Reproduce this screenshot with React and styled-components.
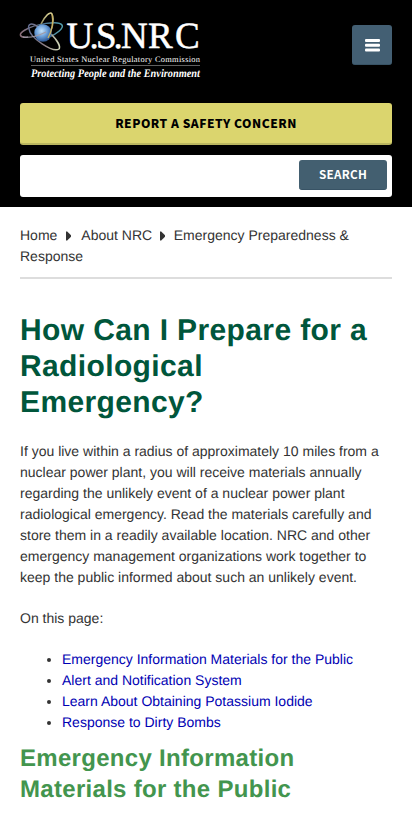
import React from 'react';
import styled, { createGlobalStyle } from 'styled-components';

const GlobalStyle = createGlobalStyle`
  * { box-sizing: border-box; }
  html, body { margin: 0; background: #fff; }
  body {
    height: 823px;
    overflow: hidden;
    font: 14px/21px "Liberation Sans", Arial, sans-serif;
    color: #333;
    text-rendering: geometricPrecision;
  }
`;

const Header = styled.header`
  height: 207px;
  padding: 10px 20px;
  background: #000;
`;
const Brand = styled.div`
  display: flex;
  justify-content: space-between;
  align-items: flex-start;
  height: 93px;
`;
const LogoSvg = styled.svg`
  display: block;
  flex: none;
  overflow: visible;
`;
const MenuButton = styled.button`
  display: flex;
  align-items: center;
  justify-content: center;
  width: 40px;
  height: 40px;
  margin: 15px 0 0;
  padding: 1px 0 0;
  border: 0;
  border-bottom: 1px solid #385365;
  border-radius: 3px;
  background: #435f73;
`;
const ReportButton = styled.button`
  display: block;
  width: 100%;
  height: 42px;
  padding: 0;
  border: 0;
  border-bottom: 2px solid #bab65f;
  border-radius: 3px;
  background: #dbd56e;
  color: #000;
  font: 900 12px/38px "Noto Sans CJK SC", sans-serif;
  letter-spacing: 0.5px;
`;
const SearchForm = styled.form`
  display: flex;
  height: 42px;
  margin-top: 10px;
  padding: 5px;
  border-radius: 3px;
  background: #fff;
`;
const SearchInput = styled.input`
  flex: 1;
  min-width: 0;
  border: 0;
  outline: 0;
  background: transparent;
`;
const SearchButton = styled.button`
  width: 88px;
  height: 30px;
  padding: 0 0 2px;
  border: 0;
  border-bottom: 1px solid #385365;
  border-radius: 3px;
  background: #435f70;
  color: #fff;
  font: 700 11.7px/27px "Noto Sans CJK SC", sans-serif;
  letter-spacing: 0.25px;
`;
const Main = styled.main`
  padding: 18px 20px 0;
`;
const Breadcrumb = styled.nav`
  height: 54px;
  border-bottom: 2px solid #ddd;
`;
const ArrowSvg = styled.svg`
  margin: 0 10px 0 9px;
  vertical-align: -1px;
`;
const LastArrow = styled(ArrowSvg)`
  margin: 0 8.6px 0 8px;
`;
const Title = styled.h1`
  margin: 34px 0 20px;
  color: #00563b;
  font-size: 30px;
  line-height: 36px;
  letter-spacing: 0.375px;
`;
const Paragraph = styled.p`
  margin: 0 0 20px;
`;
const LinkList = styled.ul`
  margin: 0 0 10px;
  padding-left: 42px;
`;
const PageLink = styled.a`
  color: #0000b3;
  text-decoration: none;
`;
const Subtitle = styled.h2`
  margin: 0;
  color: #43954e;
  font-size: 24px;
  line-height: 31px;
  letter-spacing: 0.3px;
`;

function Logo() {
  return (
    <LogoSvg width="181" height="72" viewBox="20 10 181 72" role="img" aria-label="U.S. NRC">
      <defs>
        <radialGradient id="nucleus" cx=".42" cy=".38" r=".62">
          <stop offset="0" stopColor="#c5e3fa" />
          <stop offset=".5" stopColor="#6fa3dc" />
          <stop offset="1" stopColor="#2c5795" />
        </radialGradient>
        <linearGradient id="wide" x1="0" x2="1">
          <stop offset="0" stopColor="#8d6f7a" />
          <stop offset=".55" stopColor="#4f7591" />
          <stop offset="1" stopColor="#529fae" />
        </linearGradient>
        <linearGradient id="tall" x1="0" y1="0" x2="0" y2="1">
          <stop offset="0" stopColor="#d8cf94" />
          <stop offset=".5" stopColor="#8a8558" />
          <stop offset="1" stopColor="#8794a0" />
        </linearGradient>
        <linearGradient id="diagonal" x1="0" x2="1">
          <stop offset="0" stopColor="#626d91" />
          <stop offset=".5" stopColor="#8b7c83" />
          <stop offset="1" stopColor="#d0d6b8" />
        </linearGradient>
      </defs>
      <g fill="none" strokeWidth="1.5">
        <path d="M28 37C19 38 18 34 25 30C35 24 59 20 62 25C64 28 57 34 49 37" stroke="url(#wide)" />
        <path d="M41 24C45 16 50 11 52 14C55 20 52 31 47 38" stroke="url(#tall)" />
        <path d="M38 27C32 22 27 24 29 29C30 38 53 53 59 49C61 46 56 39 51 34" stroke="url(#diagonal)" />
      </g>
      <circle cx="43" cy="33" r="8.7" fill="url(#nucleus)" />
      <path d="M52 14c1.5 8 .5 16-4 24" fill="none" stroke="#c8b263" strokeWidth="1.3" />
      <path d="M23 37c7 1 15-1 23-5" fill="none" stroke="#a39ba6" strokeWidth="1.2" />
      <g fill="#fff" fontFamily="Liberation Serif, serif">
        <text x="66.5 89.5 96 113.5 121 148 175" y="47.5" fontSize="37" stroke="#fff" strokeWidth=".5">U.S.NRC</text>
        <text x="30" y="61.5" fontSize="8.4" textLength="170" lengthAdjust="spacing">United States Nuclear Regulatory Commission</text>
        <text x="31" y="77" fontSize="11.5" fontStyle="italic" fontWeight="700" textLength="169" lengthAdjust="spacingAndGlyphs">Protecting People and the Environment</text>
      </g>
      <path d="M31 65.5H200" stroke="#777" strokeWidth=".8" />
    </LogoSvg>
  );
}

function MenuIcon() {
  return (
    <svg width="15" height="13" viewBox="0 0 15 13" fill="#fff" aria-hidden="true">
      <rect width="15" height="3" rx="1" />
      <rect y="4.75" width="15" height="3" rx="1" />
      <rect y="9.5" width="15" height="3" rx="1" />
    </svg>
  );
}

function Arrow({ as: Shape = ArrowSvg }) {
  return (
    <Shape width="5" height="10" viewBox="0 0 5 10" fill="#333" aria-hidden="true">
      <path d="M0 .5H1.2L5 4.3V5.7L1.2 9.5H0Z" />
    </Shape>
  );
}

const links = [
  'Emergency Information Materials for the Public',
  'Alert and Notification System',
  'Learn About Obtaining Potassium Iodide',
  'Response to Dirty Bombs',
];

export default function App() {
  return (
    <>
      <GlobalStyle />
      <Header>
        <Brand>
          <Logo />
          <MenuButton aria-label="Menu"><MenuIcon /></MenuButton>
        </Brand>
        <ReportButton>REPORT A SAFETY CONCERN</ReportButton>
        <SearchForm onSubmit={(event) => event.preventDefault()}>
          <SearchInput aria-label="Search" />
          <SearchButton>SEARCH</SearchButton>
        </SearchForm>
      </Header>
      <Main>
        <Breadcrumb>
          <span>Home</span><Arrow /><span>About NRC</span><Arrow as={LastArrow} /><span>Emergency Preparedness &amp; Response</span>
        </Breadcrumb>
        <Title>How Can I Prepare for a Radiological Emergency?</Title>
        <Paragraph>
          If you live within a radius of approximately 10 miles from a nuclear power plant, you will
          receive materials annually regarding the unlikely event of a nuclear power plant
          radiological emergency. Read the materials carefully and store them in a readily available
          location. NRC and other emergency management organizations work together to keep the public
          informed about such an unlikely event.
        </Paragraph>
        <Paragraph>On this page:</Paragraph>
        <LinkList>
          {links.map((label) => (
            <li key={label}><PageLink href="#">{label}</PageLink></li>
          ))}
        </LinkList>
        <Subtitle>Emergency Information Materials for the Public</Subtitle>
      </Main>
    </>
  );
}
